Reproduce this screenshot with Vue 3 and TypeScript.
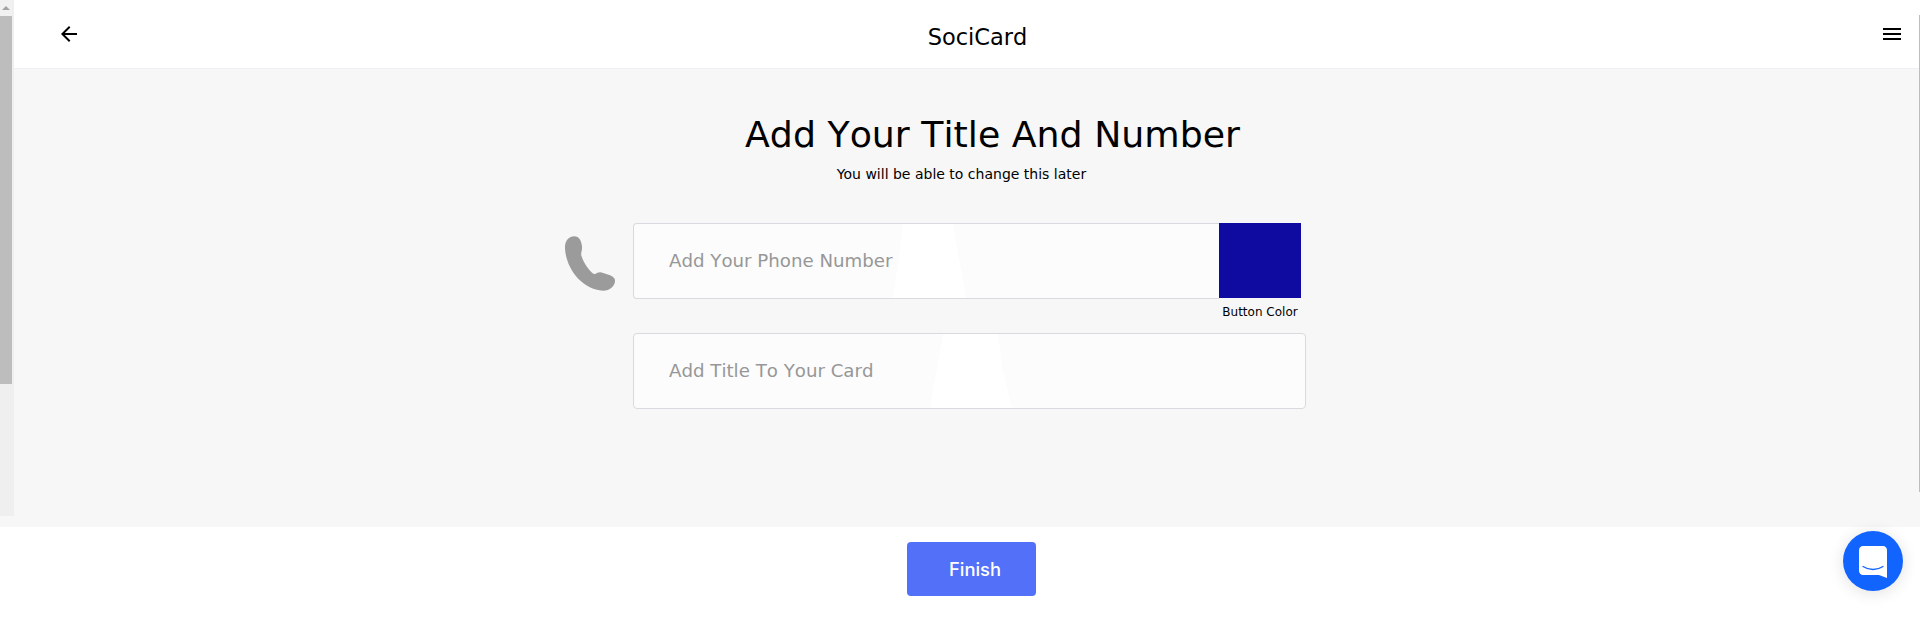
<script setup lang="ts">
const fields = [
  { placeholder: 'Add Your Phone Number', shape: 'shape-a' },
  { placeholder: 'Add Title To Your Card', shape: 'shape-b' },
]
</script>

<template>
  <div class="page">
    <header class="topbar">
      <button class="icon-btn" aria-label="Back">
        <svg width="24" height="24" viewBox="0 0 24 24"><path d="M20 11H7.83l5.59-5.59L12 4l-8 8 8 8 1.41-1.41L7.83 13H20z" /></svg>
      </button>
      <div class="brand">SociCard</div>
      <button class="icon-btn" aria-label="Menu">
        <svg width="24" height="24" viewBox="0 0 24 24"><path d="M3 18h18v-2H3zm0-5h18v-2H3zm0-7v2h18V6z" /></svg>
      </button>
    </header>

    <main class="content">
      <h1 class="title">Add Your Title And Number</h1>
      <p class="subtitle">You will be able to change this later</p>

      <div class="form">
        <div class="phone-col">
          <svg class="phone" width="52" height="55" viewBox="70 76 155 166"><path d="M100 77C84 77 71 90 72 114C75 172 122 238 187 241C207 241 223 228 223 210C223 200 212 194 182 186C170 183 166 193 158 190C142 178 128 156 121 134C120 125 125 118 123 105C120 85 112 77 100 77Z" /></svg>
        </div>
        <div class="fields">
          <div class="field field-first">
            <span class="shape" :class="fields[0].shape"></span>
            <input class="input" type="text" :placeholder="fields[0].placeholder" />
            <div class="color-pick">
              <div class="swatch"></div>
              <div class="swatch-label">Button Color</div>
            </div>
          </div>
          <div class="field">
            <span class="shape" :class="fields[1].shape"></span>
            <input class="input" type="text" :placeholder="fields[1].placeholder" />
          </div>
        </div>
      </div>
    </main>

    <footer class="footer">
      <button class="finish">Finish</button>
    </footer>

    <div class="scroll-left">
      <div class="scroll-arrow"></div>
      <div class="scroll-thumb"></div>
    </div>
    <div class="scroll-right"></div>

    <button class="chat" aria-label="Chat">
      <svg width="28" height="32" viewBox="0 0 28 32">
        <path d="M4 0H24C26.2 0 28 1.8 28 4V32L20 29H4C1.8 29 0 27.2 0 25V4C0 1.8 1.8 0 4 0Z" fill="#fff" />
        <path d="M4 20.5C10 24.5 18 24.5 24 20.5" fill="none" stroke="#1264ff" stroke-width="1.3" stroke-linecap="round" />
      </svg>
    </button>
  </div>
</template>

<style>
html, body { margin: 0; background: #fff; overflow: hidden; }
</style>

<style scoped>
.page {
  position: relative;
  width: 1920px;
  height: 643px;
  display: flex;
  flex-direction: column;
  overflow: hidden;
  font-family: "DejaVu Sans", sans-serif;
  color: #000;
  font-kerning: none;
}
.topbar {
  height: 68px;
  flex: none;
  box-sizing: content-box;
  border-bottom: 1px solid #eef0f6;
  background: #fff;
  display: flex;
  align-items: center;
  justify-content: space-between;
  padding: 0 16px 0 57px;
}
.icon-btn {
  width: 24px;
  height: 24px;
  padding: 0;
  border: 0;
  background: none;
}
.icon-btn svg { display: block; fill: #000; }
.brand {
  font-size: 22.5px;
  line-height: 28px;
  margin-top: 5px;
  padding-left: 2px;
  padding-right: 8px;
}
.content {
  height: 458px;
  flex: none;
  background: #f7f7f7;
  display: flex;
  flex-direction: column;
  align-items: center;
}
.title {
  margin: 44px 0 0;
  padding-left: 65px;
  font-size: 36.3px;
  font-weight: 400;
  line-height: 44px;
}
.subtitle {
  margin: 7px 0 0;
  padding-left: 3px;
  font-size: 14px;
  line-height: 20px;
  font-kerning: normal;
}
.form {
  margin-top: 39px;
  display: flex;
  align-self: flex-start;
  margin-left: 564px;
}
.phone-col { width: 69px; flex: none; padding-top: 13px; }
.phone { display: block; fill: #9b9b9b; }
.fields { display: flex; flex-direction: column; gap: 34px; width: 673px; }
.field {
  position: relative;
  height: 76px;
  box-sizing: border-box;
  border: 1px solid #d8dadf;
  border-radius: 4px;
  background: #fcfcfc;
}
.field-first { width: 586px; border-right: 0; border-radius: 4px 0 0 4px; }
.shape { position: absolute; top: 0; bottom: 0; background: #fff; }
.shape-a {
  left: 259px;
  width: 73px;
  clip-path: polygon(14% 0, 82% 0, 90% 45%, 100% 100%, 0 100%, 8% 45%);
}
.shape-b {
  left: 296px;
  width: 82px;
  clip-path: polygon(16% 0, 83% 0, 88% 45%, 100% 100%, 0 100%, 9% 45%);
}
.input {
  position: relative;
  display: block;
  width: 100%;
  height: 100%;
  box-sizing: border-box;
  border: 0;
  outline: 0;
  background: transparent;
  padding: 0 0 2px 35px;
  font-family: "DejaVu Sans", sans-serif;
  font-kerning: none;
  font-size: 18.2px;
}
.input::placeholder { color: #979797; opacity: 1; }
.color-pick {
  position: absolute;
  left: 585px;
  top: -1px;
  width: 82px;
}
.swatch { width: 82px; height: 75px; background: #0f0aa0; }
.swatch-label {
  margin-top: 7px;
  font-size: 12px;
  line-height: 14px;
  text-align: center;
  white-space: nowrap;
}
.footer {
  flex: 1;
  background: #fff;
  display: flex;
  justify-content: center;
  padding-top: 15px;
  padding-left: 23px;
}
.finish {
  width: 129px;
  height: 54px;
  border: 0;
  border-radius: 4px;
  background: #5271f8;
  color: #fff;
  font-family: Inter, sans-serif;
  font-size: 18.4px;
  font-weight: 500;
  padding: 0 0 0 7px;
}
.scroll-left {
  position: absolute;
  left: 0;
  top: 0;
  width: 14px;
  height: 516px;
  background: #efefef;
}
.scroll-arrow {
  width: 12px;
  height: 16px;
  position: relative;
  background: #f1f1f1;
}
.scroll-arrow::after {
  content: "";
  position: absolute;
  left: 2px;
  top: 6px;
  border-left: 4px solid transparent;
  border-right: 4px solid transparent;
  border-bottom: 4px solid #a3a3a3;
}
.scroll-thumb { width: 12px; height: 368px; background: #bdbdbd; }
.scroll-right {
  position: absolute;
  right: 0;
  top: 15px;
  width: 1px;
  height: 477px;
  background: #bdbdbd;
}
.chat {
  position: absolute;
  left: 1843px;
  top: 531px;
  width: 60px;
  height: 60px;
  padding: 0;
  border: 0;
  border-radius: 50%;
  background: #1264ff;
  box-shadow: 0 2px 16px rgba(0, 0, 0, 0.12);
  display: flex;
  align-items: center;
  justify-content: center;
}
.chat svg { display: block; margin-top: 2px; }
</style>
